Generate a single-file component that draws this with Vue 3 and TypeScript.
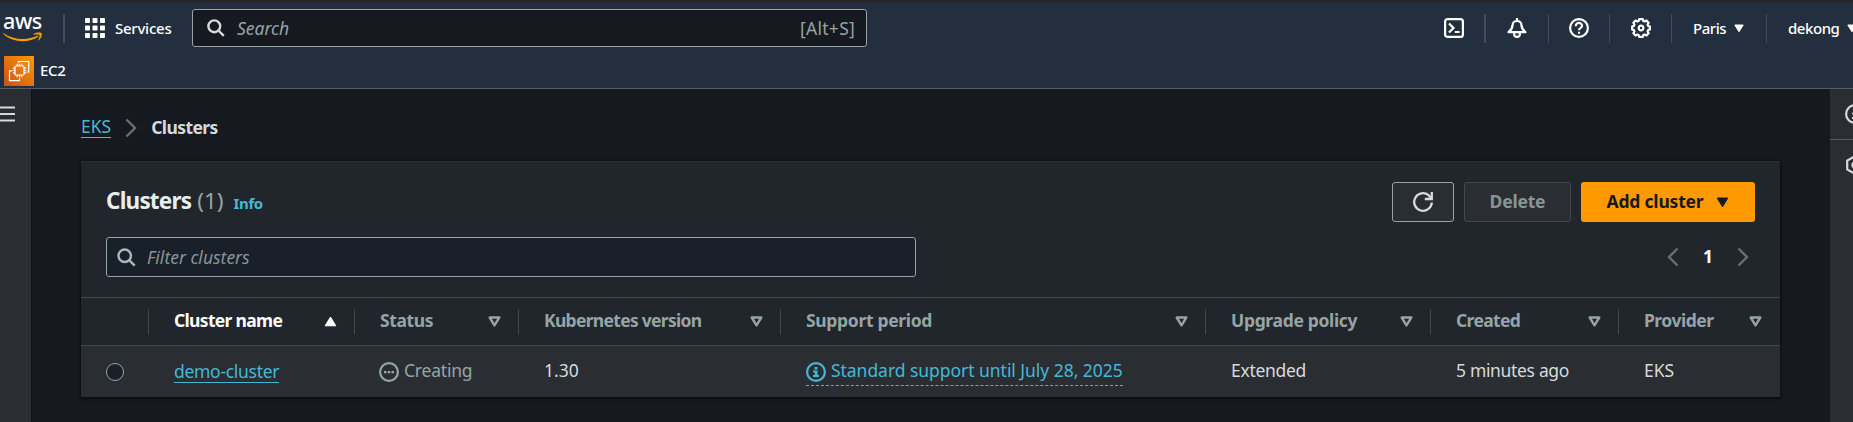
<script setup lang="ts">
interface Column {
  key: string
  label: string
  sorted?: boolean
}

const columns: Column[] = [
  { key: 'name', label: 'Cluster name', sorted: true },
  { key: 'status', label: 'Status' },
  { key: 'version', label: 'Kubernetes version' },
  { key: 'support', label: 'Support period' },
  { key: 'policy', label: 'Upgrade policy' },
  { key: 'created', label: 'Created' },
  { key: 'provider', label: 'Provider' },
]
</script>

<template>
  <div class="console">
    <header class="top">
      <div class="bar">
        <div class="logo">
          <span class="logo-text">aws</span>
          <svg width="40" height="10" viewBox="0 0 40 10" fill="#f90">
            <path d="M.3 1C6 5 13 7 20 7c5 0 10-1.200 14.500-3.200.8-.3 1.300.4.6 1C31 7.700 25.500 9.300 20 9.300 12 9.300 5 6.500.2 1.800z" />
            <path d="M30.500 2c2.500-1.700 7-1.800 8-1 .7 1 .2 5-2.500 7.200-.5.4-1 .2-.7-.4.8-1.900 1.700-4 1.200-4.700s-3.300-.6-5.400-.4c-.6 0-.8-.4-.6-.7z" />
          </svg>
        </div>
        <span class="rule rule-logo" />
        <button class="services">
          <svg width="20" height="20" viewBox="0 0 20 20" fill="#fff">
            <template v-for="r in 3" :key="r">
              <rect v-for="c in 3" :key="c" :x="(c - 1) * 7.5" :y="(r - 1) * 7.5" width="5" height="5" rx=".8" />
            </template>
          </svg>
          <span class="t-services">Services</span>
        </button>
        <div class="search">
          <svg width="18" height="18" viewBox="0 0 18 18" fill="none" stroke="#d5dbdb" stroke-width="2.400">
            <circle cx="7.300" cy="7.300" r="5.900" /><path d="M11.500 11.500l5.300 5.300" />
          </svg>
          <span class="t-search">Search</span>
          <span class="t-alt">[Alt+S]</span>
        </div>
        <nav class="tools">
          <span class="tool tool-shell">
            <svg width="20" height="20" viewBox="0 0 20 20" fill="none" stroke="#fff" stroke-width="2.200">
              <rect x="1.100" y="1.100" width="17.800" height="17.800" rx="2.500" /><path d="M5 5.500l4.500 4.500L5 14.500M10.800 14h4.800" />
            </svg>
          </span>
          <span class="tool tool-bell">
            <svg width="20" height="20" viewBox="0 0 20 20" fill="none" stroke="#fff" stroke-width="2.200" stroke-linejoin="round">
              <path d="M10 0v2.500M1.500 14.200h17c-3.200-2.300-3.800-3.700-4.100-7a4.400 4.400 0 0 0-8.800 0c-.3 3.300-.9 4.700-4.100 7zM7.200 15v1.200a2.800 2.700 0 0 0 5.600 0V15" />
            </svg>
          </span>
          <span class="tool tool-help">
            <svg width="20" height="20" viewBox="0 0 20 20" fill="none" stroke="#fff" stroke-width="2.200">
              <circle cx="10" cy="10" r="8.900" /><path d="M6.800 8.200V7.800A3.100 2.800 0 0 1 13.100 7.800C13.100 10 10 9.700 10 12.300M10 13.700v2" />
            </svg>
          </span>
          <span class="tool tool-gear">
            <svg width="20" height="20" viewBox="0 0 20 20" fill="none" stroke="#fff" stroke-width="2.200" stroke-linejoin="round">
              <path d="M8.200 1.100h3.600l.5 1.900 1.300.5 1.900-1 2.100 2.200-1 1.900.5 1.300 1.800.6v3l-1.800.6-.5 1.300 1 1.900-2.100 2.200-1.900-1-1.300.5-.5 1.900H8.200L7.700 17l-1.300-.5-1.900 1-2.100-2.200 1-1.900-.5-1.300-1.800-.6v-3l1.800-.6.5-1.300-1-1.900 2.100-2.200 1.900 1L7.700 3z" />
              <circle cx="10" cy="10" r="2.300" />
            </svg>
          </span>
          <span class="tool tool-region">
            <span class="t-paris">Paris</span>
            <svg width="10" height="9" viewBox="0 0 10 9"><path d="M.8 1h8.400L5 7.800z" fill="#fff" stroke="#fff" stroke-linejoin="round" /></svg>
          </span>
          <span class="tool tool-user">
            <span class="t-user">dekong</span>
            <svg width="10" height="9" viewBox="0 0 10 9"><path d="M.8 1h8.400L5 7.800z" fill="#fff" stroke="#fff" stroke-linejoin="round" /></svg>
          </span>
        </nav>
      </div>
      <div class="favorites">
        <svg width="30" height="30" viewBox="0 0 30 30">
          <defs><linearGradient id="ec2" x1="0" y1="1" x2="1" y2="0"><stop stop-color="#c8511b" /><stop offset="1" stop-color="#f90" /></linearGradient></defs>
          <rect width="30" height="30" fill="url(#ec2)" />
          <g fill="none" stroke="#fff" stroke-width="1.200">
            <rect x="11" y="10" width="9" height="9" rx="1" />
            <path d="M13.200 7.800V10M15.500 7.800V10M17.800 7.800V10M13.200 19v2.200M15.500 19v2.200M17.800 19v2.200M8.800 12.200H11M8.800 14.500H11M8.800 16.800H11M20 12.200h2.200M20 14.500h2.200M20 16.800h2.200" />
            <path d="M14.500 7V5.500h10.200v10.300H23M8 14.800H5.500v9.800h10V22" />
          </g>
        </svg>
        <span class="t-ec2">EC2</span>
      </div>
    </header>

    <div class="body">
      <aside class="rail rail-left">
        <svg width="15" height="16" viewBox="0 0 15 16" stroke="#d5dbdb" stroke-width="2.200"><path d="M0 1.500h15M0 8h15M0 14.500h15" /></svg>
      </aside>

      <main class="page">
        <nav class="crumbs">
          <a class="t-eks">EKS</a>
          <svg width="12" height="20" viewBox="0 0 12 20" fill="none" stroke="#687078" stroke-width="2.400"><path d="M1.500 1.500L10 10l-8.500 8.500" /></svg>
          <span class="t-crumb">Clusters</span>
        </nav>

        <section class="card">
          <div class="card-head">
            <div class="title-row">
              <h1><span class="t-title">Clusters</span><span class="t-count">(1)</span><a class="t-info">Info</a></h1>
              <div class="actions">
                <button class="btn btn-refresh">
                  <svg width="20" height="20" viewBox="0 0 20 20" fill="none" stroke="#d5dbdb" stroke-width="2.300">
                    <path d="M18.800 10.500a8.800 8.800 0 1 1-3.200-7.300L18 6" /><path d="M18.800 0v7h-7" />
                  </svg>
                </button>
                <button class="btn btn-delete"><span class="t-delete">Delete</span></button>
                <button class="btn btn-add">
                  <span class="t-add">Add cluster</span>
                  <svg width="13" height="11" viewBox="0 0 13 11"><path d="M1.200 1h10.600L6.500 9.800z" fill="#16191f" stroke="#16191f" stroke-linejoin="round" /></svg>
                </button>
              </div>
            </div>
            <div class="filter-row">
              <div class="filter">
                <svg width="19" height="19" viewBox="0 0 18 18" fill="none" stroke="#aab7b8" stroke-width="2.300">
                  <circle cx="7.300" cy="7.300" r="5.900" /><path d="M11.500 11.500l5.300 5.300" />
                </svg>
                <span class="t-filter">Filter clusters</span>
              </div>
              <div class="pager">
                <svg width="12" height="20" viewBox="0 0 12 20" fill="none" stroke="#687078" stroke-width="2.400"><path d="M10.500 1.500L2 10l8.500 8.500" /></svg>
                <span class="t-page">1</span>
                <svg width="12" height="20" viewBox="0 0 12 20" fill="none" stroke="#687078" stroke-width="2.400"><path d="M1.500 1.500L10 10l-8.500 8.500" /></svg>
              </div>
            </div>
          </div>

          <div class="grid grid-head">
            <div class="cell pick"><i class="divider" /></div>
            <div v-for="(col, i) in columns" :key="col.key" class="cell" :class="{ sorted: col.sorted }">
              <span class="label" :class="'h-' + col.key">{{ col.label }}</span>
              <svg v-if="col.sorted" width="13" height="11" viewBox="0 0 13 11"><path d="M1.200 9.800h10.600L6.500 1z" fill="#fff" stroke="#fff" stroke-linejoin="round" /></svg>
              <svg v-else width="13" height="11" viewBox="0 0 13 11"><path d="M1.700 1.500h9.600L6.500 9.300z" fill="none" stroke="#95a5a6" stroke-width="2.400" stroke-linejoin="round" /></svg>
              <i v-if="i < columns.length - 1" class="divider" />
            </div>
          </div>
          <div class="grid grid-row">
            <div class="cell pick"><span class="radio" /></div>
            <div class="cell"><a class="c-name">demo-cluster</a></div>
            <div class="cell status">
              <svg width="20" height="20" viewBox="0 0 20 20">
                <circle cx="10" cy="10" r="8.900" fill="none" stroke="#95a5a6" stroke-width="2.200" />
                <path d="M5 9h2.500v2.200H5zM8.800 9h2.500v2.200H8.800zM12.500 9H15v2.200h-2.500z" fill="#95a5a6" />
              </svg>
              <span class="label c-status">Creating</span>
            </div>
            <div class="cell"><span class="label c-version">1.30</span></div>
            <div class="cell">
              <a class="support">
                <svg width="20" height="20" viewBox="0 0 20 20">
                  <circle cx="10" cy="10" r="8.900" fill="none" stroke="#44b9d6" stroke-width="2.200" />
                  <path d="M8.500 5h3v2.500h-3zM7.200 8.500h4.300V13H13v2H7v-2h1.800v-2.500H7.200z" fill="#44b9d6" />
                </svg>
                <span class="c-support">Standard support until July 28, 2025</span>
              </a>
            </div>
            <div class="cell"><span class="label c-policy">Extended</span></div>
            <div class="cell"><span class="label c-created">5 minutes ago</span></div>
            <div class="cell"><span class="label c-provider">EKS</span></div>
          </div>
        </section>
      </main>

      <aside class="rail rail-right">
        <span class="panel-tab panel-info">
          <svg width="20" height="20" viewBox="0 0 20 20">
            <circle cx="10" cy="10" r="8.900" fill="none" stroke="#d5dbdb" stroke-width="2.200" />
            <path d="M8.500 5h3v2.500h-3zM7.200 8.500h4.300V13H13v2H7v-2h1.800v-2.500H7.200z" fill="#d5dbdb" />
          </svg>
        </span>
        <span class="panel-tab panel-hex">
          <svg width="20" height="20" viewBox="0 0 20 20" fill="none" stroke="#d5dbdb" stroke-width="2.200">
            <path d="M10 1.200l7.800 4.400v8.800L10 18.800l-7.800-4.400V5.600z" /><circle cx="10" cy="10" r="2.600" />
          </svg>
        </span>
      </aside>
    </div>
  </div>
</template>

<style>
html,
body {
  margin: 0;
  background: #16191f;
  overflow: hidden;
}
</style>

<style scoped>
.console {
  width: 1853px;
  height: 422px;
  overflow: hidden;
  display: flex;
  flex-direction: column;
  background: #16191f;
  color: #d5dbdb;
  font-family: 'Noto Sans', 'Open Sans', sans-serif;
  font-size: 17.5px;
  line-height: 24px;
  white-space: nowrap;
}
svg { display: block; flex: none; }
button { font: inherit; color: inherit; border: 0; background: none; padding: 0; letter-spacing: inherit; }

.top {
  box-sizing: border-box;
  height: 89px;
  flex: none;
  background: #232f3e;
  border-top: 3px solid #24282d;
  border-bottom: 1px solid #545b64;
  color: #fff;
  font-size: 15px;
}
.bar { height: 50px; display: flex; align-items: center; }
.logo { width: 40px; margin: 0 0 5px 3px; display: flex; flex-direction: column; flex: none; }
.logo-text { font-size: 21.5px; line-height: 22px; font-weight: 500; letter-spacing: -0.4px; }
.rule { width: 2px; height: 29px; background: #414d5c; }
.rule-logo { margin-left: 20px; }
.services { display: flex; align-items: center; margin-left: 20px; gap: 10px; width: 107px; }
.t-services { font-weight: 500; letter-spacing: -0.25px; }
.search {
  box-sizing: border-box;
  width: 675px;
  height: 38px;
  display: flex;
  align-items: center;
  padding: 0 11px 0 14px;
  border: 1px solid #95a5a6;
  border-radius: 3px;
  background: #16191f;
  color: #95a5a6;
  font-size: 17.5px;
}
.t-search { margin-left: 12px; font-style: italic; padding-bottom: 1px; }
.t-alt { margin-left: auto; letter-spacing: 0.25px; padding-bottom: 1px; }
.tools { display: flex; margin-left: auto; height: 29px; }
.tool { display: flex; align-items: center; box-sizing: border-box; border-left: 1px solid #414d5c; flex: none; }
.tool-shell { width: 40px; border: 0; }
.tool-bell { width: 64px; padding-left: 21px; border-left-width: 2px; }
.tool-help { width: 61px; padding-left: 20px; }
.tool-gear { width: 62px; padding-left: 21px; }
.tool-region { width: 95px; padding-left: 21px; }
.tool-user { width: 87px; padding-left: 21px; }
.t-paris { flex: none; width: 41px; font-weight: 500; letter-spacing: -0.45px; }
.t-user { flex: none; width: 59px; font-weight: 500; letter-spacing: -0.45px; }
.favorites { display: flex; align-items: center; margin: 3px 0 0 4px; gap: 6px; height: 30px; }
.t-ec2 { font-weight: 500; letter-spacing: -0.3px; padding-bottom: 2px; }

.body { flex: 1; display: flex; min-height: 0; }
.rail { background: #2a2e33; flex: none; box-sizing: border-box; }
.rail-left { width: 32px; padding-top: 17px; border-right: 1px solid #0f1216; }
.rail-right { width: 23px; overflow: hidden; }
.panel-tab { display: block; height: 51px; box-sizing: border-box; padding: 15px 0 0 15px; }
.panel-info { border-bottom: 1px solid #545b64; }
.page { flex: 1; min-width: 0; padding: 0 50px 0 49px; }

.crumbs { display: flex; align-items: center; height: 72px; }
.crumbs svg { margin: 5px 14px 0 14px; }
.t-eks, .t-info, .c-name { color: #44b9d6; }
.t-eks, .c-name { border-bottom: 1px solid #44b9d6; line-height: 21px; }
.t-eks { margin-top: 4px; }
.t-crumb { font-weight: 700; letter-spacing: -0.6px; margin-top: 3px; }

.card { background: #21252c; height: 235px; border-top: 1px solid #2a2e33; box-shadow: 0 1px 2px 1px #0b0d11; }
.card-head { height: 135px; padding: 20px 25px 0; box-sizing: border-box; }
.title-row { display: flex; justify-content: space-between; height: 40px; }
h1 { margin: 0; display: flex; align-items: baseline; font-size: 22.5px; line-height: 37px; }
.t-title { color: #eaeded; letter-spacing: -0.8px; }
.t-count { font-weight: 400; color: #95a5a6; margin-left: 6px; }
.t-info { font-size: 15px; margin-left: 10px; letter-spacing: -0.4px; }
.actions { display: flex; gap: 10px; }
.btn {
  box-sizing: border-box;
  height: 40px;
  display: flex;
  align-items: center;
  justify-content: center;
  border-radius: 3px;
  font-weight: 700;
  letter-spacing: -0.2px;
  background: #2a2e33;
}
.btn span { padding-bottom: 2px; }
.btn-refresh { width: 62px; border: 1px solid #95a5a6; }
.btn-delete { width: 107px; border: 1px solid #414750; color: #879596; }
.btn-add { width: 174px; background: #f90; color: #16191f; gap: 13px; }
.filter-row { display: flex; justify-content: space-between; align-items: center; margin-top: 15px; }
.filter {
  box-sizing: border-box;
  width: 810px;
  height: 40px;
  border: 1px solid #95a5a6;
  border-radius: 3px;
  background: #1a2029;
  display: flex;
  align-items: center;
  padding-left: 10px;
  gap: 11px;
}
.t-filter { font-style: italic; color: #879596; padding-bottom: 1px; }
.pager { display: flex; align-items: center; margin-right: 6px; }
.t-page { font-weight: 700; color: #fff; width: 58px; text-align: center; padding-bottom: 2px; }

.grid { display: grid; grid-template-columns: 68px 206px 164px 262px 425px 225px 188px 161px; border-top: 1px solid #414750; }
.grid-head { height: 47px; font-weight: 700; color: #95a5a6; }
.grid-row { height: 51px; background: #2a2e33; }
.cell { display: flex; align-items: center; padding-left: 25px; position: relative; min-width: 0; }
.grid-head .cell { justify-content: space-between; padding-right: 18px; }
.label { padding-bottom: 3px; }
.sorted { color: #fff; }
.divider { position: absolute; right: 0; top: 11px; width: 1px; height: 25px; background: #414750; }
.h-name { letter-spacing: -0.68px; }
.h-status { letter-spacing: -0.4px; }
.h-version { letter-spacing: -0.7px; }
.h-support { letter-spacing: -0.33px; }
.h-policy { letter-spacing: -0.33px; }
.h-created { letter-spacing: -0.65px; }
.h-provider { letter-spacing: -0.5px; }
.radio { box-sizing: border-box; width: 18px; height: 18px; border: 1px solid #95a5a6; border-radius: 50%; background: #1a2029; }
.c-name { letter-spacing: -0.3px; }
.status { gap: 5px; color: #95a5a6; padding-left: 24px; }
.c-status { letter-spacing: -0.2px; }
.c-policy { letter-spacing: -0.3px; }
.c-created { letter-spacing: -0.33px; }
.support { display: flex; align-items: center; gap: 5px; color: #44b9d6; border-bottom: 1px dashed #44b9d6; padding-top: 1px; }
.c-support { letter-spacing: -0.04px; padding-bottom: 3px; }
</style>
